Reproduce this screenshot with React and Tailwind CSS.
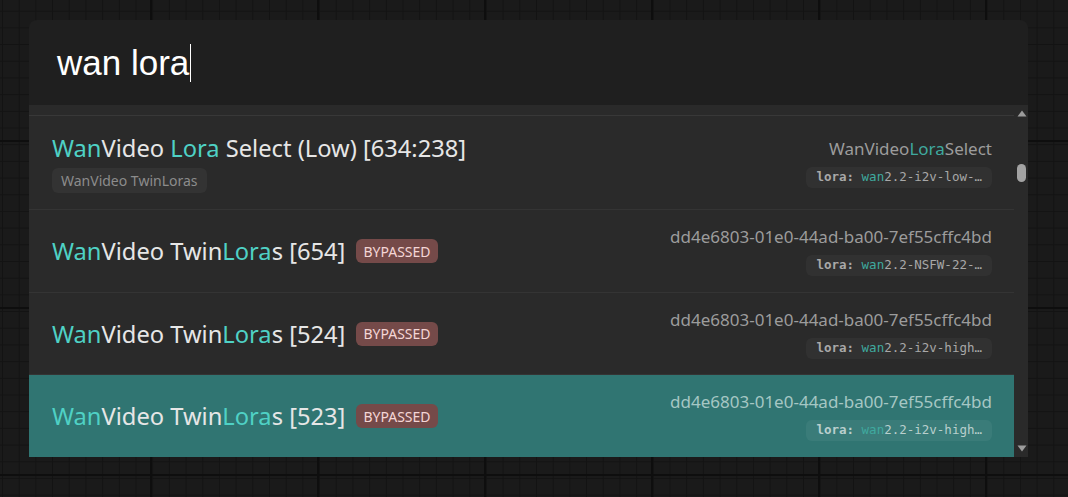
import React from 'react';

const T = ({ children }) => <span className="text-[#4fd1c5]">{children}</span>;

const Chip = ({ value, selected }) => (
    <div className={`mt-[7px] h-[21px] flex items-center px-[10px] rounded-md font-['DejaVu_Sans_Mono',monospace] text-[12.5px] whitespace-pre ${selected ? 'bg-white/5 text-[#b9cfcd]' : 'bg-[#313131] text-[#a8a8a8]'}`}>
        <span className="font-bold">lora:</span>
        <span> </span>
        <span className="text-[#3fa99f]">wan</span>
        <span>{value}</span>
    </div>
);

const Bypassed = () => (
    <span className="ml-[11px] h-[24px] px-[7px] rounded-md bg-[#754a49] text-[#f4d6d6] text-[14px] flex items-center">
        BYPASSED
    </span>
);

const rows = [
    { id: '654', value: '2.2-NSFW-22-…', h: 'h-[83px] border-b border-[#343434]' },
    { id: '524', value: '2.2-i2v-high…', h: 'h-[82px] border-b border-[#343434]' },
    { id: '523', value: '2.2-i2v-high…', h: 'h-[82px]', selected: true },
];

const App = () => {
    return (
        <div className="h-[497px] overflow-hidden bg-[#1a1a1a] pt-[20px] pl-[29px] [background-image:linear-gradient(#0e0e0e_2px,transparent_2px),linear-gradient(90deg,#0e0e0e_2px,transparent_2px),linear-gradient(#131313_1px,transparent_1px),linear-gradient(90deg,#131313_1px,transparent_1px)] [background-size:167px_167px,167px_167px,16.7px_16.7px,16.7px_16.7px] [background-position:-17px_-27px,-17px_-27px,2px_-6px,2px_-6px]">
            <div className="w-[999px] rounded-t-lg overflow-hidden font-['Noto_Sans',sans-serif]">
                {/* search box */}
                <div className="h-[85px] bg-[#1f1f1f] flex items-center pl-[28px]">
                    <span className="font-['Liberation_Sans',sans-serif] text-[35px] text-white leading-none">wan lora</span>
                    <span className="ml-[1px] w-px h-[38px] bg-white"></span>
                </div>

                {/* results */}
                <div className="flex bg-[#2a2a2a] h-[352px]">
                    <div className="flex-1 flex flex-col">
                        <div className="h-[11px] border-b border-[#383838]"></div>

                        <div className="h-[94px] border-b border-[#343434] flex items-center justify-between pl-[23px] pr-[22px]">
                            <div className="flex flex-col items-start">
                                <div className="text-[23.7px] leading-[30px] text-[#e6e6e6]">
                                    <T>Wan</T>Video <T>Lora</T> Select (Low) [634:238]
                                </div>
                                <span className="mt-[5px] h-[25px] px-[9px] rounded-md bg-[#333333] text-[#8c8c8c] text-[14px] flex items-center">WanVideo TwinLoras</span>
                            </div>
                            <div className="flex flex-col items-end">
                                <div className="text-[17px] leading-[22px] text-[#9c9c9c]">
                                    WanVideo<span className="text-[#3fa99f]">Lora</span>Select
                                </div>
                                <Chip value="2.2-i2v-low-…" />
                            </div>
                        </div>

                        {rows.map((r) => (
                            <div key={r.id} className={`${r.h} flex items-center justify-between pl-[23px] pr-[22px] ${r.selected ? 'bg-[#307572]' : ''}`}>
                                <div className="flex items-center">
                                    <div className="text-[23.7px] leading-[30px] text-[#e6e6e6]">
                                        <T>Wan</T>Video Twin<T>Lora</T>s [{r.id}]
                                    </div>
                                    <Bypassed />
                                </div>
                                <div className="flex flex-col items-end">
                                    <div className={`text-[17px] leading-[22px] ${r.selected ? 'text-[#a6c7c4]' : 'text-[#9c9c9c]'}`}>
                                        dd4e6803-01e0-44ad-ba00-7ef55cffc4bd
                                    </div>
                                    <Chip value={r.value} selected={r.selected} />
                                </div>
                            </div>
                        ))}
                    </div>

                    {/* scrollbar */}
                    <div className="w-[14px] bg-[#2a2a2a] flex flex-col items-center py-[5px]">
                        <svg width="10" height="7" viewBox="0 0 10 7" className="ml-[1px]"><path d="M5 0.5 L9.5 6.5 L0.5 6.5 Z" fill="#9c9c9c" /></svg>
                        <div className="mt-[47px] w-[9px] h-[18px] rounded-full bg-[#a3a3a3] ml-[1px]"></div>
                        <div className="flex-1"></div>
                        <svg width="10" height="7" viewBox="0 0 10 7" className="ml-[1px]"><path d="M0.5 0.5 L9.5 0.5 L5 6.5 Z" fill="#9c9c9c" /></svg>
                    </div>
                </div>
            </div>
        </div>
    );
};

export default App;
